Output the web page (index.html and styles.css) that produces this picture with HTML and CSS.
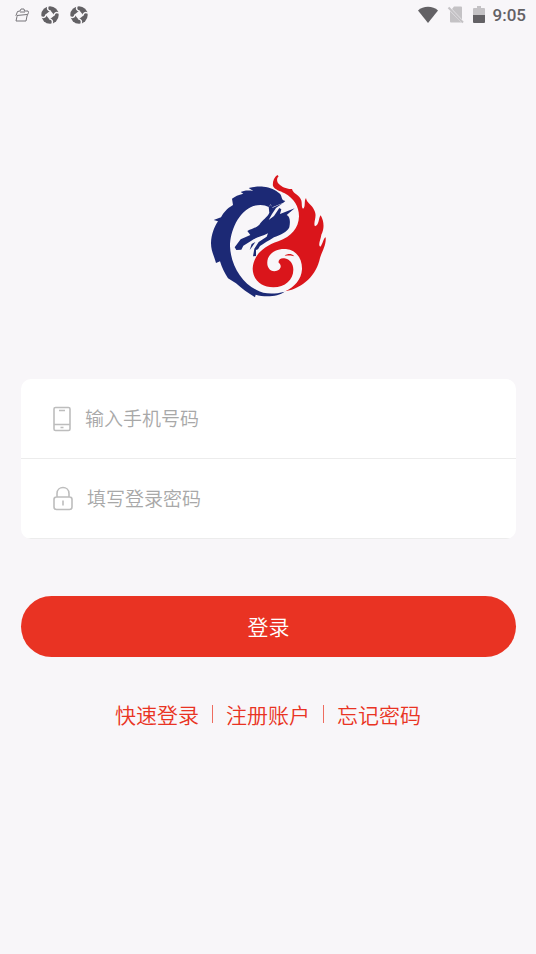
FILE: index.html
```
<!DOCTYPE html>
<html lang="zh-CN">
<head>
  <meta charset="UTF-8">
  <meta name="viewport" content="width=device-width, initial-scale=1">
  <title>登录</title>
  <link rel="stylesheet" href="styles.css">
</head>
<body>

  <header class="status-bar">
    <div class="status-left">
      <svg class="icon-bag" viewBox="0 0 16 16" width="16" height="16">
        <path d="M3.500 4.500L6 4L7 2H10L10.500 4L14 4L14.500 5.500L13 9L12 14H2L3 9.500L2 8.500ZM3 8.500L13 7.500M6 5H11"/>
      </svg>
      <svg class="icon-swirl" viewBox="0 0 18 18" width="18" height="18">
        <circle cx="9" cy="9" r="8.700"/>
        <path class="center" d="M9.500 4.500L13.500 9.500L8.500 13.500L4.500 8.500Z"/>
        <path class="slit" d="M9.500 5Q5.500 4.500 7 0M13 9.500Q13.500 5.500 18 7M8.500 13Q12.500 13.500 11 18M5 8.500Q4.500 12.500 0 11"/>
      </svg>
      <svg class="icon-swirl" viewBox="0 0 18 18" width="18" height="18">
        <circle cx="9" cy="9" r="8.700"/>
        <path class="center" d="M9.500 4.500L13.500 9.500L8.500 13.500L4.500 8.500Z"/>
        <path class="slit" d="M9.500 5Q5.500 4.500 7 0M13 9.500Q13.500 5.500 18 7M8.500 13Q12.500 13.500 11 18M5 8.500Q4.500 12.500 0 11"/>
      </svg>
    </div>
    <div class="status-right">
      <svg class="icon-wifi" viewBox="0 0 22 18" width="22" height="18">
        <path d="M11 17L1 4.500C6-.5 16-.5 21 4.500Z"/>
      </svg>
      <svg class="icon-sim" viewBox="0 0 18 18" width="18" height="18">
        <path d="M7 .5H14Q15 .5 15 1.500V13.500L5 3ZM3 5L14.500 16.500H4Q3 16.500 3 15.500Z"/>
        <path class="slash" d="M1.500 1.500L16 16.500"/>
      </svg>
      <svg class="icon-battery" viewBox="0 0 12 18" width="12" height="18">
        <path class="empty" d="M1 2H4V0H8V2H11Q12 2 12 3V9H0V3Q0 2 1 2Z"/>
        <path d="M0 9H12V16Q12 17 11 17H1Q0 17 0 16Z"/>
      </svg>
      <span class="clock">9:05</span>
    </div>
  </header>

  <main class="login">
    <svg class="logo" viewBox="0 0 408 408" width="136" height="136">
      <!-- dragon body -->
      <path class="blue" d="M256 99C242 98 248 84 238 76C228 66 210 58 190 56C174 55 160 57 146 60L160 69C144 66 130 68 122 72L130 77C115 80 105 85 96 92L99 111C80 122 70 135 63 148L41 156L54 160C42 178 34 200 33 225C33 250 42 262 48 285L60 280C66 300 74 315 84 331L108 346C125 362 145 376 165 388L167 380C195 388 235 386 254 371C220 380 190 378 170 366C125 345 92 290 90 235C90 190 115 130 160 114C180 109 195 111 206 117L212 109L217 118L250 104Z"/>
      <!-- dragon head -->
      <path class="blue" d="M104 238L122 214L151 201L142 189C155 182 168 180 178 170C187 155 202 148 208 134L206 116L213 110L218 119L248 106L228 120L216 138L206 156L222 144L238 120L244 124L240 138L284 121L260 141C271 146 271 162 268 178C262 192 240 202 222 208C206 218 192 226 180 234L174 244L168 246L168 264L159 265L163 242L176 222L200 206L204 196C186 206 168 208 154 218L130 233L124 245L109 246Z"/>
      <path class="blue" d="M149 246L155 228L166 222L158 234Z"/>
      <!-- phoenix -->
      <path class="red" d="M232 21C222 28 217 42 219 54C224 66 240 68 254 76C282 92 297 115 297 145C296 180 275 205 235 220C186 236 160 265 158 302C159 337 185 358 220 358C255 358 280 335 280 305C280 288 270 273 253 271C242 269 234 276 236 284C249 294 240 309 223 310C204 309 198 289 204 271C212 251 235 241 258 243C292 247 307 275 306 304C304 335 284 357 256 370C310 360 350 320 360 270C366 250 379 232 377 208C370 210 368 230 361 236C353 231 362 215 364 200C374 180 372 160 362 142C355 150 358 172 345 175C338 164 354 145 342 125C336 110 321 107 318 90C311 98 318 118 309 122C302 116 310 100 298 87C288 76 280 76 276 63C260 64 244 56 237 48C230 41 229 32 236 25Z"/>
      <path class="red" d="M254 263C264 256 276 257 283 265C272 261 265 263 254 263Z"/>
    </svg>

    <form class="login-form">
      <div class="fields">
        <label class="field">
          <svg class="icon-phone" viewBox="0 0 18 26" width="18" height="26">
            <path d="M2.500 1.500H15.500Q17 1.500 17 3V23Q17 24.500 15.500 24.500H2.500Q1 24.500 1 23V3Q1 1.500 2.500 1.500ZM6 4.500H12M1 18.500H17M7.500 21.500H10.500"/>
          </svg>
          <input type="tel" aria-label="手机号码" placeholder="输入手机号码">
        </label>
        <label class="field">
          <svg class="icon-lock" viewBox="0 0 20 26" width="20" height="26">
            <path d="M3.500 11H16.500Q19 11 19 13.500V21Q19 23.500 16.500 23.500H3.500Q1 23.500 1 21V13.500Q1 11 3.500 11ZM4 11V7.500C4 -.5 16 -.5 16 7.500V11M10 14.500V19.500"/>
          </svg>
          <input type="password" aria-label="登录密码" placeholder="填写登录密码">
        </label>
      </div>
      <button class="login-btn" type="submit">登录</button>
    </form>

    <nav class="links">
      <a href="#">快速登录</a>
      <a href="#">注册账户</a>
      <a href="#">忘记密码</a>
    </nav>
  </main>

</body>
</html>
```
FILE: styles.css
```
* {
  box-sizing: border-box;
}
body {
  margin: 0;
  min-height: 100vh;
  background: #f8f6f9;
  font-family: "Noto Sans CJK SC", sans-serif;
}
svg {
  display: block;
  flex: none;
}

/* status bar */
.status-bar {
  display: flex;
  justify-content: space-between;
  align-items: center;
  height: 30px;
  padding: 0 10px 0 14px;
}
.status-left {
  display: flex;
  align-items: center;
  gap: 11px;
}
.status-right {
  display: flex;
  align-items: center;
  gap: 8px;
}
.icon-bag {
  fill: none;
  stroke: #77757a;
}
.icon-swirl {
  fill: #636165;
}
.icon-swirl .center {
  fill: #f8f6f9;
}
.icon-swirl .slit {
  fill: none;
  stroke: #f8f6f9;
  stroke-width: 1.5;
}
.icon-wifi,
.icon-battery {
  fill: #636165;
}
.icon-battery .empty,
.icon-sim {
  fill: #c4c2c5;
}
.icon-sim .slash {
  fill: none;
  stroke: #c4c2c5;
  stroke-width: 2;
}
.clock {
  font: 500 17px/20px Roboto, sans-serif;
  color: #636165;
}

/* login */
.login {
  padding: 138px 20px 0;
}
.logo {
  margin: 0 auto;
}
.logo .blue {
  fill: #1c2975;
}
.logo .red {
  fill: #da151b;
}
.login-form {
  margin-top: 75px;
  padding-left: 1px;
}
.fields {
  background: #fff;
  border-radius: 10px;
  overflow: hidden;
}
.field {
  display: flex;
  align-items: center;
  gap: 14px;
  height: 80px;
  padding: 0 32px;
  border-bottom: 1px solid #ececec;
}
.field svg {
  fill: none;
  stroke: #bdbdbd;
  stroke-width: 1.6;
}
.field input {
  flex: 1;
  min-width: 0;
  padding: 0 0 2px;
  border: none;
  outline: none;
  background: none;
  font: 350 19px/28px "Noto Sans CJK SC", sans-serif;
  color: #333;
}
.field input::placeholder {
  color: #a8a8a8;
}
.login-btn {
  display: block;
  width: 100%;
  height: 61px;
  margin-top: 57px;
  padding: 0 0 2px;
  border: none;
  border-radius: 31px;
  background: #e93323;
  color: #fff;
  font: 350 21px/30px "Noto Sans CJK SC", sans-serif;
  cursor: pointer;
}
.links {
  display: flex;
  justify-content: center;
  align-items: center;
  margin-top: 42px;
}
.links a {
  display: flex;
  align-items: center;
  font-size: 21px;
  font-weight: 350;
  line-height: 30px;
  color: #e93323;
  text-decoration: none;
}
.links a + a::before {
  content: "";
  width: 1px;
  height: 18px;
  margin: 0 13px;
  background: #ee6c60;
}
```
